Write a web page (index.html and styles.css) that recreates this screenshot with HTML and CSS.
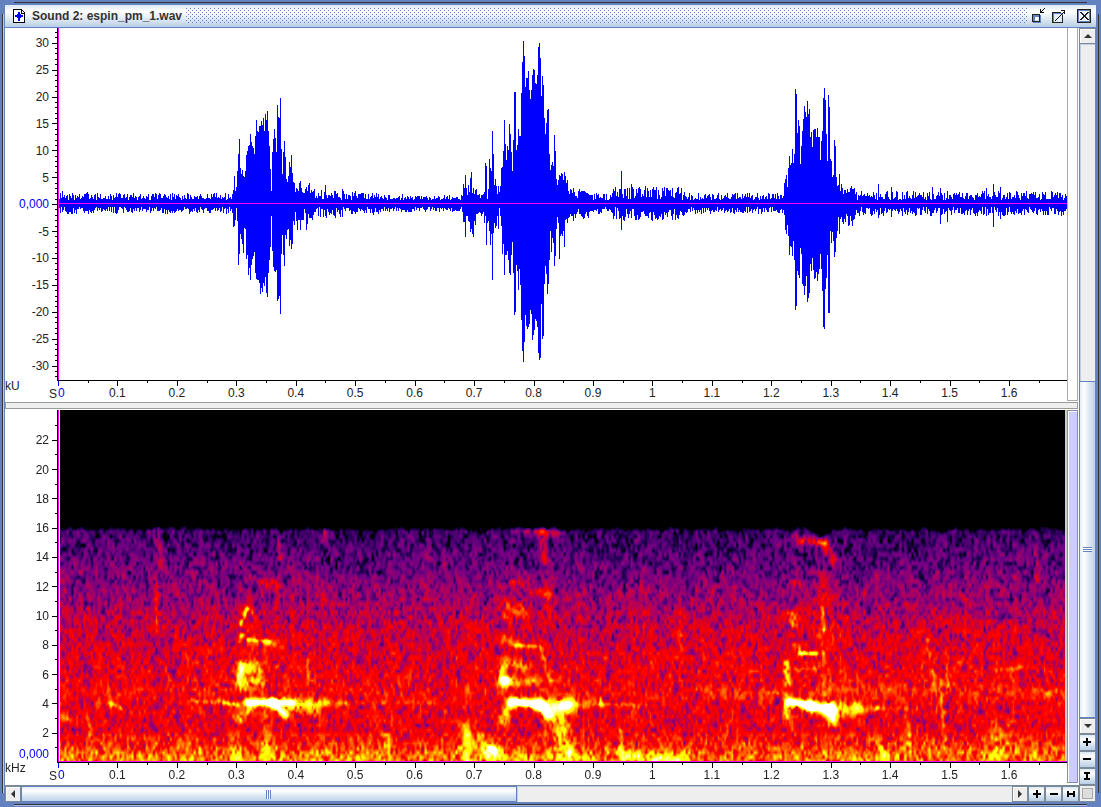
FILE: index.html
```html
<!DOCTYPE html>
<html lang="en">
<head>
<meta charset="utf-8">
<title>Sound 2: espin_pm_1.wav</title>
<link rel="stylesheet" href="styles.css">
</head>
<body>
<main class="window">
  <header class="titlebar">
    <svg class="doc-icon" width="12" height="14" viewBox="0 0 12 14" shape-rendering="crispEdges"><path d="M.5 .5h8l3 3v10h-11z" fill="#fff" stroke="#000"/><path d="M8 1v3h3" fill="none" stroke="#000"/><path d="M5 3h2v2h1v1h2v2h-2v1h-1v3h-2v-3h-1v-1h-2v-2h2v-1h1z" fill="#00f"/></svg>
    <h1 class="title">Sound 2: espin_pm_1.wav</h1>
    <div class="grip-dots"></div>
    <div class="window-buttons">
      <button class="win-btn" aria-label="Minimize"><svg width="16" height="16" viewBox="0 0 16 16" shape-rendering="crispEdges"><path d="M2.500 7.500h6v6h-6z" fill="none" stroke="#6382bf" stroke-width="2"/><path d="M1.500 6.500h7v7h-7z" fill="none" stroke="#222"/><path d="M4 9h3v3H4z" fill="#fff"/><path d="M9 1h1v3h3v1H9zM10 3h1v1h-1zM11 2h1v1h-1zM12 1h1v1h-1zM13 0h1v1h-1z" fill="#111"/></svg></button>
      <button class="win-btn" aria-label="Maximize"><svg width="16" height="16" viewBox="0 0 16 16" shape-rendering="crispEdges"><path d="M2.500 5.500h9v9h-9z" fill="#e6eef7" stroke="#6382bf"/><path d="M10 4.500H1.500v10h10V7" fill="none" stroke="#222"/><path d="M4 12h1v1H4zM5 11h1v1H5zM6 10h1v1H6zM7 9h1v1H7zM8 8h1v1H8zM9 7h1v1H9zM10 6h1v1h-1zM11 5h1v1h-1zM12 4h1v1h-1zM10 2h4v4h-1V3h-3z" fill="#111"/></svg></button>
      <button class="win-btn close" aria-label="Close"><svg width="16" height="16" viewBox="0 0 16 16" shape-rendering="crispEdges"><path d="M1.500 1.500h13v13h-13z" fill="none" stroke="#222"/><path d="M2.500 2.500h11v11h-11z" fill="#edf3f9" stroke="#6382bf"/><path d="M4 4h2v1h1v1h1v1h1V6h1V5h1V4h2v1h-1v1h-1v1h-1v2h1v1h1v1h1v1h-2v-1h-1v-1H9V9H8v1H7v1H6v1H4v-1h1v-1h1V9h1V7H6V6H5V5H4z" fill="#223"/></svg></button>
    </div>
  </header>
  <div class="content">
    <div class="views">
      <section class="view" aria-label="Waveform">
        <svg class="y-axis" id="wave-y"></svg>
        <div class="plot wave-plot"><canvas id="wave" width="1008" height="352"></canvas></div>
        <svg class="corner"><text x="0" y="10">kU</text><text x="44" y="18">S</text></svg>
        <svg class="x-axis" id="wave-x"></svg>
        <div class="side"></div>
      </section>
      <div class="divider"></div>
      <section class="view" aria-label="Spectrogram">
        <svg class="y-axis" id="spec-y"></svg>
        <div class="plot spec-plot"><canvas id="spec" width="1005" height="351"></canvas></div>
        <svg class="corner"><text x="0" y="10">kHz</text><text x="44" y="18">S</text></svg>
        <svg class="x-axis" id="spec-x"></svg>
        <div class="side active"></div>
      </section>
    </div>
    <div class="vbar">
      <button class="arrow" aria-label="Scroll up"><svg width="8" height="4"><path d="M0 4l4-4 4 4z"/></svg></button>
      <div class="track" role="scrollbar" aria-orientation="vertical" aria-valuenow="100" aria-controls="spec"><div class="empty"></div><div class="thumb"></div></div>
      <button class="arrow" aria-label="Scroll down"><svg width="8" height="4"><path d="M0 0h8l-4 4z"/></svg></button>
      <button class="zoom" aria-label="Zoom in vertically"><svg width="9" height="9"><path d="M3 0h2v3h3v2H5v3H3V5H0V3h3z"/></svg></button>
      <button class="zoom" aria-label="Zoom out vertically"><svg width="9" height="9"><path d="M0 3h8v2H0z"/></svg></button>
      <button class="zoom" aria-label="Fit vertically"><svg width="9" height="9"><path d="M1 0h6v2H5v4h2v2H1V6h2V2H1z"/></svg></button>
    </div>
    <div class="hbar">
      <button class="arrow" aria-label="Scroll left"><svg width="4" height="8"><path d="M4 0v8l-4-4z"/></svg></button>
      <div class="track" role="scrollbar" aria-orientation="horizontal" aria-valuenow="0" aria-controls="spec"><div class="thumb"></div><div class="empty"></div></div>
      <button class="arrow" aria-label="Scroll right"><svg width="4" height="8"><path d="M0 0l4 4-4 4z"/></svg></button>
      <button class="zoom" aria-label="Zoom in horizontally"><svg width="9" height="9"><path d="M3 0h2v3h3v2H5v3H3V5H0V3h3z"/></svg></button>
      <button class="zoom" aria-label="Zoom out horizontally"><svg width="9" height="9"><path d="M0 3h8v2H0z"/></svg></button>
      <button class="zoom" aria-label="Fit horizontally"><svg width="9" height="9"><path d="M0 1h2v2h4V1h2v6H6V5H2v2H0z"/></svg></button>
    </div>
    <button class="size-corner" aria-label="Resize"></button>
  </div>
</main>
<script src="plots.js"></script>
</body>
</html>
```
FILE: styles.css
```css
* { box-sizing: border-box; }
html, body { height: 100%; margin: 0; }
body { font: 12px "Liberation Sans", Arial, sans-serif; background: #fff; color: #222; }

.window {
  position: relative;
  display: flex;
  flex-direction: column;
  height: 100vh;
  padding: 5px;
  background: #6382bf;
}
.window::before, .window::after { content: ""; position: absolute; pointer-events: none; }
.window::before { inset: 2px 14px; border: solid #333; border-width: 1px 0; box-shadow: 0 1px #a9bddc; }
.window::after { inset: 14px 2px; border: solid #333; border-width: 0 1px; box-shadow: inset 1px 0 #b8cfe5; }

.titlebar {
  position: relative;
  display: flex;
  align-items: center;
  height: 23px;
  padding: 0 4px 0 8px;
  border-bottom: 1px solid #6382bf;
  background: linear-gradient(#dde8f3, #fff 30%, #dde8f3 65%, #b8cfe5);
}
.title { margin: 0 4px 0 7px; font-size: 12px; font-weight: bold; color: #333; white-space: nowrap; }
.grip-dots {
  flex: 1;
  height: 16px;
  background:
    conic-gradient(#7f98c6 0 0) 0 0 / 0 0,
    radial-gradient(circle at 1px 1px, #7b94c4 0 50%, transparent 50%) 0 0 / 0 0,
    linear-gradient(90deg, transparent 0 0);
  position: relative;
  overflow: hidden;
}
.grip-dots::before, .grip-dots::after {
  content: "";
  position: absolute;
  inset: 0;
  background: linear-gradient(90deg, #6382bf 1px, transparent 1px) 0 0 / 4px 4px;
  -webkit-mask: linear-gradient(#000 1px, transparent 1px) 0 0 / 4px 4px;
  mask: linear-gradient(#000 1px, transparent 1px) 0 0 / 4px 4px;
}
.grip-dots::after { top: 2px; left: 2px; }
.window-buttons { display: flex; gap: 4px; margin-left: 4px; }
button { display: flex; align-items: center; justify-content: center; margin: 0; padding: 0; border: 0; background: none; }
.win-btn { width: 16px; height: 16px; }
.win-btn.close { margin-left: 5px; }

.content {
  position: relative;
  z-index: 1;
  flex: 1;
  min-height: 0;
  display: grid;
  grid-template: minmax(0, 1fr) 17px / minmax(0, 1fr) 17px;
  background: #fff;
}
.views {
  display: grid;
  grid-template-rows: minmax(0, 1fr) 8px minmax(0, 1fr);
  padding: 0 1px 1px 0;
}
.view { display: grid; grid-template: minmax(0, 1fr) 22px / 53px minmax(0, 1fr) 11px; min-height: 0; }
.divider { margin-bottom: 1px; border: 1px solid #999; background: #eee; }

.y-axis, .x-axis, .corner { width: 100%; height: 100%; overflow: visible; shape-rendering: crispEdges; fill: #222; }
.y-axis line, .x-axis line { stroke: #000; stroke-width: 1; }
.x-axis line.origin { stroke: #00f; }
.x-axis text { text-anchor: middle; }
.x-axis text.origin { text-anchor: start; }
.y-axis text { text-anchor: end; }
text.origin { fill: #00f; }
.plot { min-width: 0; min-height: 0; border-left: 1px solid #f0f; }
.plot canvas { display: block; width: 100%; height: 100%; }
.spec-plot { padding: 0 2px 0 1px; border-bottom: 1px solid #f0f; background: linear-gradient(90deg, #fff 50%, #ccc 50%); }
.side { grid-column: 3; grid-row: 1 / 3; margin-bottom: 1px; border: solid #aaa; border-width: 0 1px 1px; background: #fff; }
.side.active { border: 1px solid #8a8ab8; background: #ccf; box-shadow: inset 1px 1px #fff; }

.vbar, .hbar { display: flex; background: #eee; }
.vbar { flex-direction: column; }
.hbar { grid-row: 2; border-top: 1px solid #7a8a99; }
.arrow { width: 17px; height: 16px; flex: none; border: 1px solid #7a8a99; background: #eee; box-shadow: inset 1px 1px #fff; fill: #333; }
.hbar .arrow { width: 16px; }
.track { flex: 1; display: flex; min-width: 0; min-height: 0; }
.vbar .track { flex-direction: column; border: solid #7a8a99; border-width: 0 1px; }
.empty, .thumb { flex: 1; }
.empty { box-shadow: inset 1px 1px #b8cfe5; }
.thumb { display: flex; align-items: center; justify-content: center; outline: 1px solid #6382bf; outline-offset: -1px; }
.vbar .thumb { margin: 0 -1px; background: linear-gradient(90deg, #dde8f3, #fff 30%, #dde8f3 60%, #b8cfe5); }
.hbar .thumb { background: linear-gradient(#dde8f3, #fff 30%, #dde8f3 60%, #b8cfe5); }
.thumb::before { content: ""; }
.vbar .thumb::before { width: 9px; height: 5px; background: repeating-linear-gradient(#6382bf 0 1px, #fff 1px 2px); }
.hbar .thumb::before { width: 5px; height: 9px; background: repeating-linear-gradient(90deg, #6382bf 0 1px, #fff 1px 2px); }
.zoom {
  flex: none;
  width: 17px;
  height: 17px;
  border: 1px solid #7a8a99;
  background: linear-gradient(#dde8f3, #fff 30%, #dde8f3 60%, #b8cfe5);
  fill: #000;
  shape-rendering: crispEdges;
}
.hbar .zoom, .hbar .arrow { height: 16px; }
.hbar .zoom { padding-left: 2px; }
.size-corner { border: 1px solid #7a8a99; background: #ddd; box-shadow: inset 0 0 0 2px #eee, inset 0 0 0 3px #aaa; }
```
FILE: plots.js
```js
(function () {
  var NS = 'http://www.w3.org/2000/svg';
  var seed = 20241;
  function rnd() { seed = (seed * 1664525 + 1013904223) >>> 0; return seed / 4294967296; }

  function el(svg, tag, attrs, text) {
    var e = document.createElementNS(NS, tag);
    Object.keys(attrs).forEach(function (k) { e.setAttribute(k, attrs[k]); });
    if (text !== undefined) e.textContent = text;
    svg.appendChild(e);
    return e;
  }

  /* Time axis: 0 to 1.6975 seconds, a label at each tenth. */
  function timeAxis(id) {
    var svg = document.getElementById(id);
    el(svg, 'line', { x1: -1, x2: '100%', y1: 0.5, y2: 0.5 });
    for (var i = 0; i <= 33; i++) {
      var x = (i * 0.05 / 1.6975 * 100) + '%';
      var g = el(svg, 'svg', { x: x, y: 0, overflow: 'visible' });
      var a = { x1: 0.5, x2: 0.5, y1: 1, y2: i % 2 ? 3 : 6 };
      if (i === 0) a.class = 'origin';
      el(g, 'line', a);
      if (i % 2 === 0) el(g, 'text', i ? { x: 0, y: 17 } : { x: 0, y: 17, class: 'origin' }, String(i / 20));
    }
  }

  function valueAxis(id, pos, from, to, step, origin) {
    var svg = document.getElementById(id);
    el(svg, 'line', { x1: 52.5, x2: 52.5, y1: 0, y2: '100%' });
    for (var v = from; v <= to; v++) {
      var g = el(svg, 'svg', { x: 0, y: pos(v) * 100 + '%', overflow: 'visible' });
      el(g, 'line', { x1: v % step ? 50 : 47, x2: 52, y1: 0, y2: 0 });
      if (v % step === 0 && v !== 0) el(g, 'text', { x: 44, y: 4 }, String(v));
    }
    var o = el(svg, 'svg', { x: 0, y: origin * 100 + '%', overflow: 'visible' });
    el(o, 'text', { x: 44, y: 4, class: 'origin' }, '0,000');
  }

  timeAxis('wave-x');
  timeAxis('spec-x');
  valueAxis('wave-y', function (v) { return (176.6 - v * 5.38) / 352; }, -32, 32, 5, 176 / 352);
  valueAxis('spec-y', function (v) { return (352.5 - v * 14.65) / 352; }, 1, 23, 2, 344 / 352);

  /* Waveform peaks in pixels above and below the zero line, one entry per column. */
  var bursts = [
    { x: 233,
      up: [13,27,12,16,32,49,64,35,29,33,27,26,32,48,52,57,58,69,61,57,55,49,67,83,72,71,77,77,82,78,85,72,89,83,92,72,57,34,12,51,64,74,65,51,98,86,85,105,54,29,51,62,46,24,21,27,41,36,48,30,21,20,11,15,14,12,20,22,15,11,10,10,14,16,12,18,20,10,13,11,12,14,5,7],
      dn: [23,22,16,4,17,61,50,30,35,40,49,24,25,55,51,71,64,76,61,55,52,48,69,75,76,76,79,90,84,88,79,82,73,89,93,69,56,43,12,47,63,67,68,66,97,95,92,110,50,31,51,62,31,35,26,25,42,36,45,40,17,21,8,17,26,16,16,26,16,16,16,5,9,26,20,10,14,14,14,16,11,8,8,5] },
    { x: 463,
      up: [19,15,28,15,8,18,11,25,31,10,15,9,13,14,8,8,9,5,8,8,9,11,40,37,4,14,44,35,32,72,49,18,24,17,9,17,11,17,35,36,52,83,59,43,57,53,79,69,51,32,63,111,111,53,58,74,67,67,110,141,162,147,116,125,125,132,113,104,113,128,134,133,120,119,128,156,160,145,107,127,118,85,69,80,93,94,49,33,38,41,37,68,52,24,18,23,28,27,30,29,23,31,27,20,23,12,9,14,13,10,15,11,7,7,5,12,14,11,12,12,12,12,11,10,10,9,8,8,8,8],
      dn: [18,18,33,12,12,17,18,28,25,30,33,17,21,10,10,9,8,9,12,10,8,19,12,41,19,17,27,41,30,76,29,19,24,22,12,25,4,12,22,50,40,71,51,51,47,56,69,71,51,38,69,111,108,61,67,86,65,81,116,147,158,138,111,122,125,123,120,106,110,136,131,126,115,117,123,149,156,154,100,135,132,80,62,70,90,80,56,27,48,34,39,62,52,25,13,19,55,32,30,32,27,43,16,15,19,14,13,10,12,12,17,10,14,10,8,5,10,10,12,13,15,14,10,8,12,14,8,7,7,7] },
    { x: 784,
      up: [20,24,28,16,35,47,38,40,54,40,49,114,109,70,83,77,39,57,72,84,97,91,86,102,89,94,66,71,56,73,74,74,66,75,66,66,43,62,72,105,115,103,69,42,108,96,44,42,26,28,63,57,26,17,18,29,12,19,15,9,13,13,10,14,11,11,15,17,14,14,15,9],
      dn: [11,26,30,21,32,51,42,43,52,37,56,106,102,67,71,74,44,50,80,82,91,82,72,98,94,89,60,67,54,66,75,74,68,77,70,65,50,65,87,123,125,85,74,51,109,109,27,39,28,37,53,48,34,27,13,30,15,13,18,20,15,18,10,12,22,21,12,17,22,16,15,11] }
  ];
  var spikes = { 62: [12, 8], 87: [11, 7], 325: [18, 12], 355: [12, 10], 402: [9, 6], 621: [32, 26], 624: [14, 17], 631: [19, 14], 636: [14, 15], 645: [17, 12], 656: [16, 14], 672: [13, 16], 785: [19, 14], 878: [19, 14], 891: [16, 13], 932: [16, 9], 940: [15, 20], 947: [12, 18], 986: [15, 12], 993: [19, 23], 1000: [16, 15], 1016: [12, 7] };

  var wave = document.getElementById('wave').getContext('2d');
  wave.fillStyle = '#00f';
  for (var x = 59; x < 1067; x++) {
    var amp = x > 317 && x < 345 ? 14 : x > 345 && x < 380 ? 11 : x >= 380 && x < 463 ? 8 : x > 610 && x < 685 ? 17 : x > 850 ? 12 : 10;
    var up = 3 + rnd() * (amp - 3), dn = 3 + rnd() * (amp - 3);
    bursts.forEach(function (b) {
      var i = x - b.x;
      if (i >= 0 && i < b.up.length) { up = b.up[i]; dn = b.dn[i]; }
    });
    if (spikes[x]) { up = Math.max(up, spikes[x][0]); dn = Math.max(dn, spikes[x][1]); }
    wave.fillRect(x - 59, 175 - Math.round(up), 1, Math.round(up) + Math.round(dn) + 1);
  }
  wave.fillStyle = '#f0f';
  wave.fillRect(0, 175, 1008, 1);

  /* Spectrogram: energy field in absolute columns 60..1064 and rows 410..760. */
  var W = 1005, H = 351, X0 = 60, Y0 = 410;
  var field = new Float32Array(W * H);

  function ramp(stops, v) {
    if (v <= stops[0][0]) return stops[0][1];
    for (var i = 1; i < stops.length; i++) {
      if (v <= stops[i][0]) {
        var a = stops[i - 1], b = stops[i];
        return a[1] + (b[1] - a[1]) * (v - a[0]) / (b[0] - a[0]);
      }
    }
    return stops[stops.length - 1][1];
  }
  function noise(cx, cy) {
    var w = Math.ceil(W / cx) + 2, h = Math.ceil(H / cy) + 2, g = new Float32Array(w * h);
    for (var i = 0; i < g.length; i++) g[i] = rnd() + rnd() - 1;
    return function (px, py) {
      var fx = px / cx, fy = py / cy, ix = fx | 0, iy = fy | 0, k = iy * w + ix;
      fx -= ix; fy -= iy;
      return (g[k] * (1 - fx) + g[k + 1] * fx) * (1 - fy) + (g[k + w] * (1 - fx) + g[k + w + 1] * fx) * fy;
    };
  }
  var base = [[526, -0.1], [531, 0.19], [550, 0.24], [575, 0.30], [600, 0.37], [625, 0.44], [650, 0.48], [675, 0.51], [692, 0.54], [705, 0.51], [728, 0.50], [742, 0.57], [754, 0.67], [760, 0.69]];
  var fine = noise(2.4, 4.5), tiny = noise(1.7, 3), mid = noise(7, 13), broad = noise(45, 50), tall = noise(4, 60), edge = noise(5, 400);

  /* Each entry: x1, y1, x2, y2, radius, gain. */
  var marks = [
    [247,702,272,702,3,.6],[272,703,284,714,3,.38],[272,702,292,702,3,.35],[284,705,313,708,7,.24],[300,703,345,703,3,.16],[345,702,430,702,2,.08],
    [240,718,250,708,5,.22],[238,682,242,665,3,.25],[244,668,256,666,6,.24],[244,682,258,682,6,.24],[248,639,268,641,2,.28],[268,642,282,645,3,.15],[239,641,242,634,2,.25],
    [240,624,246,609,2,.28],[247,608,256,617,3,.12],[252,580,274,584,4,.14],[278,540,280,558,2,.16],[235,734,237,757,4,.16],[264,715,266,752,5,.13],[250,620,265,665,15,.05],[307,660,309,690,2,.12],
    [190,700,237,704,2,.14],[217,700,237,705,2,.13],[250,752,380,756,7,.05],
    [511,701,538,704,3.5,.65],[538,704,548,714,4,.5],[548,704,568,705,6,.28],[553,712,557,730,7,.18],[562,705,566,752,6,.17],[568,704,600,703,4,.2],[600,704,632,704,2,.13],[632,705,670,705,2,.06],
    [502,722,509,706,4,.3],[502,680,506,680,4,.4],[501,669,504,688,3,.2],[506,662,524,665,5,.22],[508,680,534,681,4,.18],[503,639,515,643,4,.18],[515,645,538,646,2,.22],[540,648,550,680,2,.17],[506,605,522,612,5,.2],[504,614,510,620,3,.15],
    [512,583,548,594,4,.16],[548,594,550,612,5,.1],[528,530,558,533,3,.22],[515,530,522,531,3,.13],[542,532,545,560,4,.18],[465,725,468,760,4,.2],[473,735,497,755,7,.18],[491,748,494,750,3,.35],[484,752,486,755,3,.15],[620,730,622,760,2,.15],[622,755,684,760,5,.2],[560,755,590,760,8,.08],
    [789,701,810,705,3.4,.6],[810,706,831,709,4,.62],[828,709,832,720,4,.35],[832,710,855,709,6,.25],[855,707,877,708,3,.18],[877,708,915,708,2,.09],
    [786,705,787,718,4,.3],[786,663,787,682,3,.3],[795,644,800,652,3,.16],[800,653,817,653,2,.32],[796,669,815,668,2,.12],[822,607,824,629,2,.25],[822,630,823,694,2,.18],[828,670,833,720,2,.12],[789,614,793,622,4,.22],[797,618,845,632,9,.05],
    [796,535,800,542,3,.2],[805,540,824,543,3,.3],[824,543,832,560,4,.24],[822,575,826,600,6,.1],[791,582,795,583,4,.15],[815,530,822,532,3,-.35],[770,692,786,694,2,.12],[700,692,780,694,5,.06],[840,690,920,691,7,.04],
    [157,530,160,570,3,.16],[155,580,158,630,3,.13],[325,530,325,540,3,.15],[110,703,121,708,2,.2],[62,716,68,719,3,.2],[106,680,110,705,2,.09],[88,718,91,740,2,.12],[680,610,680,650,2,.14],[928,640,934,690,2,.17],[947,665,948,692,2,.17],[940,680,944,740,2,.12],[995,670,1024,667,2,.12],[1035,535,1037,580,2,.14],[732,540,734,600,2,.07],[1040,690,1065,694,3,.08],[993,722,995,755,3,.16],[1000,725,1001,750,2,.15],[908,725,911,750,2,.15],[878,740,884,755,4,.13],[386,735,387,743,3,.2],[990,690,1060,695,4,.05]
  ];
  marks.forEach(function (m) {
    var r = m[4] * 1.3, pad = r * 2.6, dx = m[2] - m[0], dy = m[3] - m[1], len = dx * dx + dy * dy || 1;
    for (var y = Math.floor(Math.min(m[1], m[3]) - pad); y <= Math.max(m[1], m[3]) + pad; y++) {
      if (y < Y0 || y >= Y0 + H) continue;
      for (var x = Math.floor(Math.min(m[0], m[2]) - pad); x <= Math.max(m[0], m[2]) + pad; x++) {
        if (x < X0 || x >= X0 + W) continue;
        var t = Math.max(0, Math.min(1, ((x - m[0]) * dx + (y - m[1]) * dy) / len));
        var ex = x - m[0] - t * dx, ey = y - m[1] - t * dy;
        field[(y - Y0) * W + x - X0] += m[5] * Math.exp(-(ex * ex + ey * ey) / (r * r));
      }
    }
  });

  var R = [[0,0],[.14,36],[.3,124],[.42,190],[.53,255],[1,255]];
  var G = [[.55,0],[.68,115],[.8,255],[1,255]];
  var B = [[0,0],[.14,88],[.28,132],[.4,92],[.51,0],[.84,0],[1,255]];
  var spec = document.getElementById('spec').getContext('2d');
  var img = spec.createImageData(W, H);
  for (var py = 0; py < H; py++) {
    for (var px = 0; px < W; px++) {
      var f = field[py * W + px];
      var n = fine(px, py) * 0.19 + tiny(px, py) * 0.07;
      if (n < 0) n *= 1.45; else if (py < 325) n *= 0.75;
      n += mid(px, py) * 0.045 + broad(px, py) * 0.03 + tall(px, py) * 0.04;
      var y = py + Y0 + edge(px, 0) * 2;
      var v = ramp(base, y) + n * (f > 0.35 ? 0.35 : 1) + f;
      if (y < 527) v = 0;
      var k = (py * W + px) * 4;
      img.data[k] = ramp(R, v);
      img.data[k + 1] = ramp(G, v);
      img.data[k + 2] = ramp(B, v);
      img.data[k + 3] = 255;
    }
  }
  spec.putImageData(img, 0, 0);
})();
```
